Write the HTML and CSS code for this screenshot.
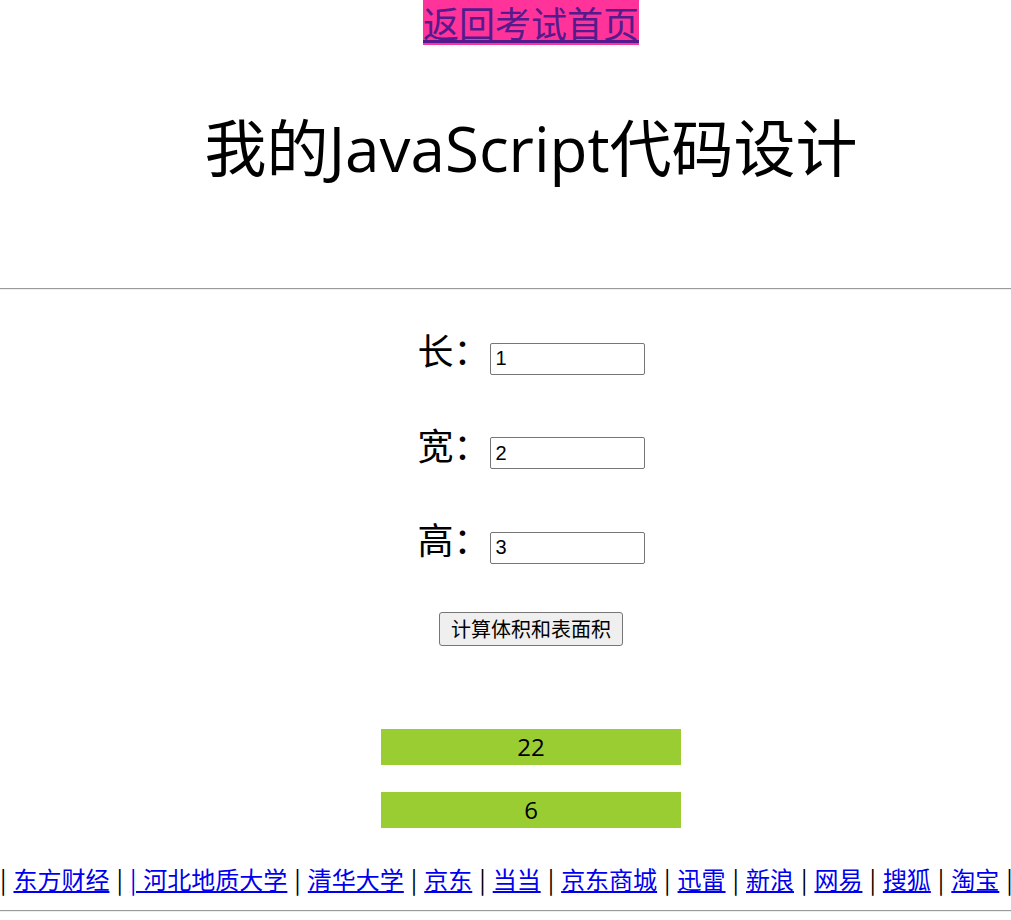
FILE: index.html
```html
<!DOCTYPE html>
<html lang="zh-CN">
<head>
<meta charset="utf-8">
<title>我的JavaScript代码设计</title>
<link rel="stylesheet" href="styles.css">
</head>
<body>
<div class="page">
  <div class="back"><a class="back-link" href="#">返回考试首页</a></div>
  <h1 class="title">我的JavaScript代码设计</h1>
  <hr class="rule">
  <form class="calc">
    <div class="row"><label class="label">长：</label><input class="field" type="text" value="1"></div>
    <div class="row"><label class="label">宽：</label><input class="field" type="text" value="2"></div>
    <div class="row"><label class="label">高：</label><input class="field" type="text" value="3"></div>
    <div class="actions"><button class="btn" type="button">计算体积和表面积</button></div>
  </form>
  <div class="results">
    <div class="result">22</div>
    <div class="result">6</div>
  </div>
  <div class="links">| <a href="#">东方财经</a> | <a href="#">| 河北地质大学</a> | <a href="#">清华大学</a> | <a href="#">京东</a> | <a href="#">当当</a> | <a href="#">京东商城</a> | <a href="#">迅雷</a> | <a href="#">新浪</a> | <a href="#">网易</a> | <a href="#">搜狐</a> | <a href="#">淘宝</a> |</div>
  <hr class="rule rule-bottom">
</div>
</body>
</html>
```

FILE: styles.css
```css
html {
  overflow: hidden;
}
body {
  margin: 0;
  font-family: "Noto Sans CJK SC", sans-serif;
  color: #000;
  background: #fff;
}
.page {
  width: 1062px;
  text-align: center;
}
.back {
  height: 45px;
}
.back-link {
  display: inline-block;
  font-size: 36px;
  line-height: 45px;
  height: 45px;
  background: #ff3399;
  color: #551a8b;
  text-decoration: underline;
}
.title {
  margin: 68px 0 0;
  font-family: "Open Sans", "Noto Sans CJK SC", sans-serif;
  font-size: 62px;
  font-weight: normal;
  line-height: 70px;
  height: 70px;
}
.rule {
  margin: 105px 0 0;
  border: 0;
  border-top: 1px solid #9a9a9a;
  border-bottom: 1px solid #eeeeee;
  height: 0;
}
.calc {
  margin: 41px 0 0;
  display: flex;
  flex-direction: column;
  align-items: center;
}
.row {
  display: flex;
  align-items: baseline;
  justify-content: center;
  margin-bottom: 51px;
}
.row:nth-child(3) {
  margin-bottom: 48px;
}
.label {
  font-size: 36px;
  line-height: 36px;
}
.field {
  box-sizing: border-box;
  width: 155px;
  height: 32px;
  margin: 0;
  padding: 1px 5px;
  border: 1px solid #767676;
  border-radius: 2px;
  font-family: "Liberation Sans", Arial, sans-serif;
  font-size: 20px;
  color: #000;
  background: #fff;
}
.btn {
  box-sizing: border-box;
  height: 34px;
  margin: 0;
  padding: 0 11px;
  border: 1px solid #767676;
  border-radius: 3px;
  background: #efefef;
  font-family: "Noto Sans CJK SC", sans-serif;
  font-size: 20px;
  line-height: 26px;
  color: #000;
}
.results {
  margin-top: 83px;
  display: flex;
  flex-direction: column;
  align-items: center;
  gap: 27px;
}
.result {
  width: 300px;
  height: 36px;
  line-height: 36px;
  background: #9acd32;
  font-family: "Open Sans", "Noto Sans CJK SC", sans-serif;
  font-size: 24px;
}
.links {
  margin-top: 36px;
  text-align: left;
  white-space: nowrap;
  font-size: 24px;
  line-height: 30px;
  word-spacing: 1.6px;
}
.links a {
  color: #0000ee;
}
.rule-bottom {
  margin-top: 16px;
}
```
